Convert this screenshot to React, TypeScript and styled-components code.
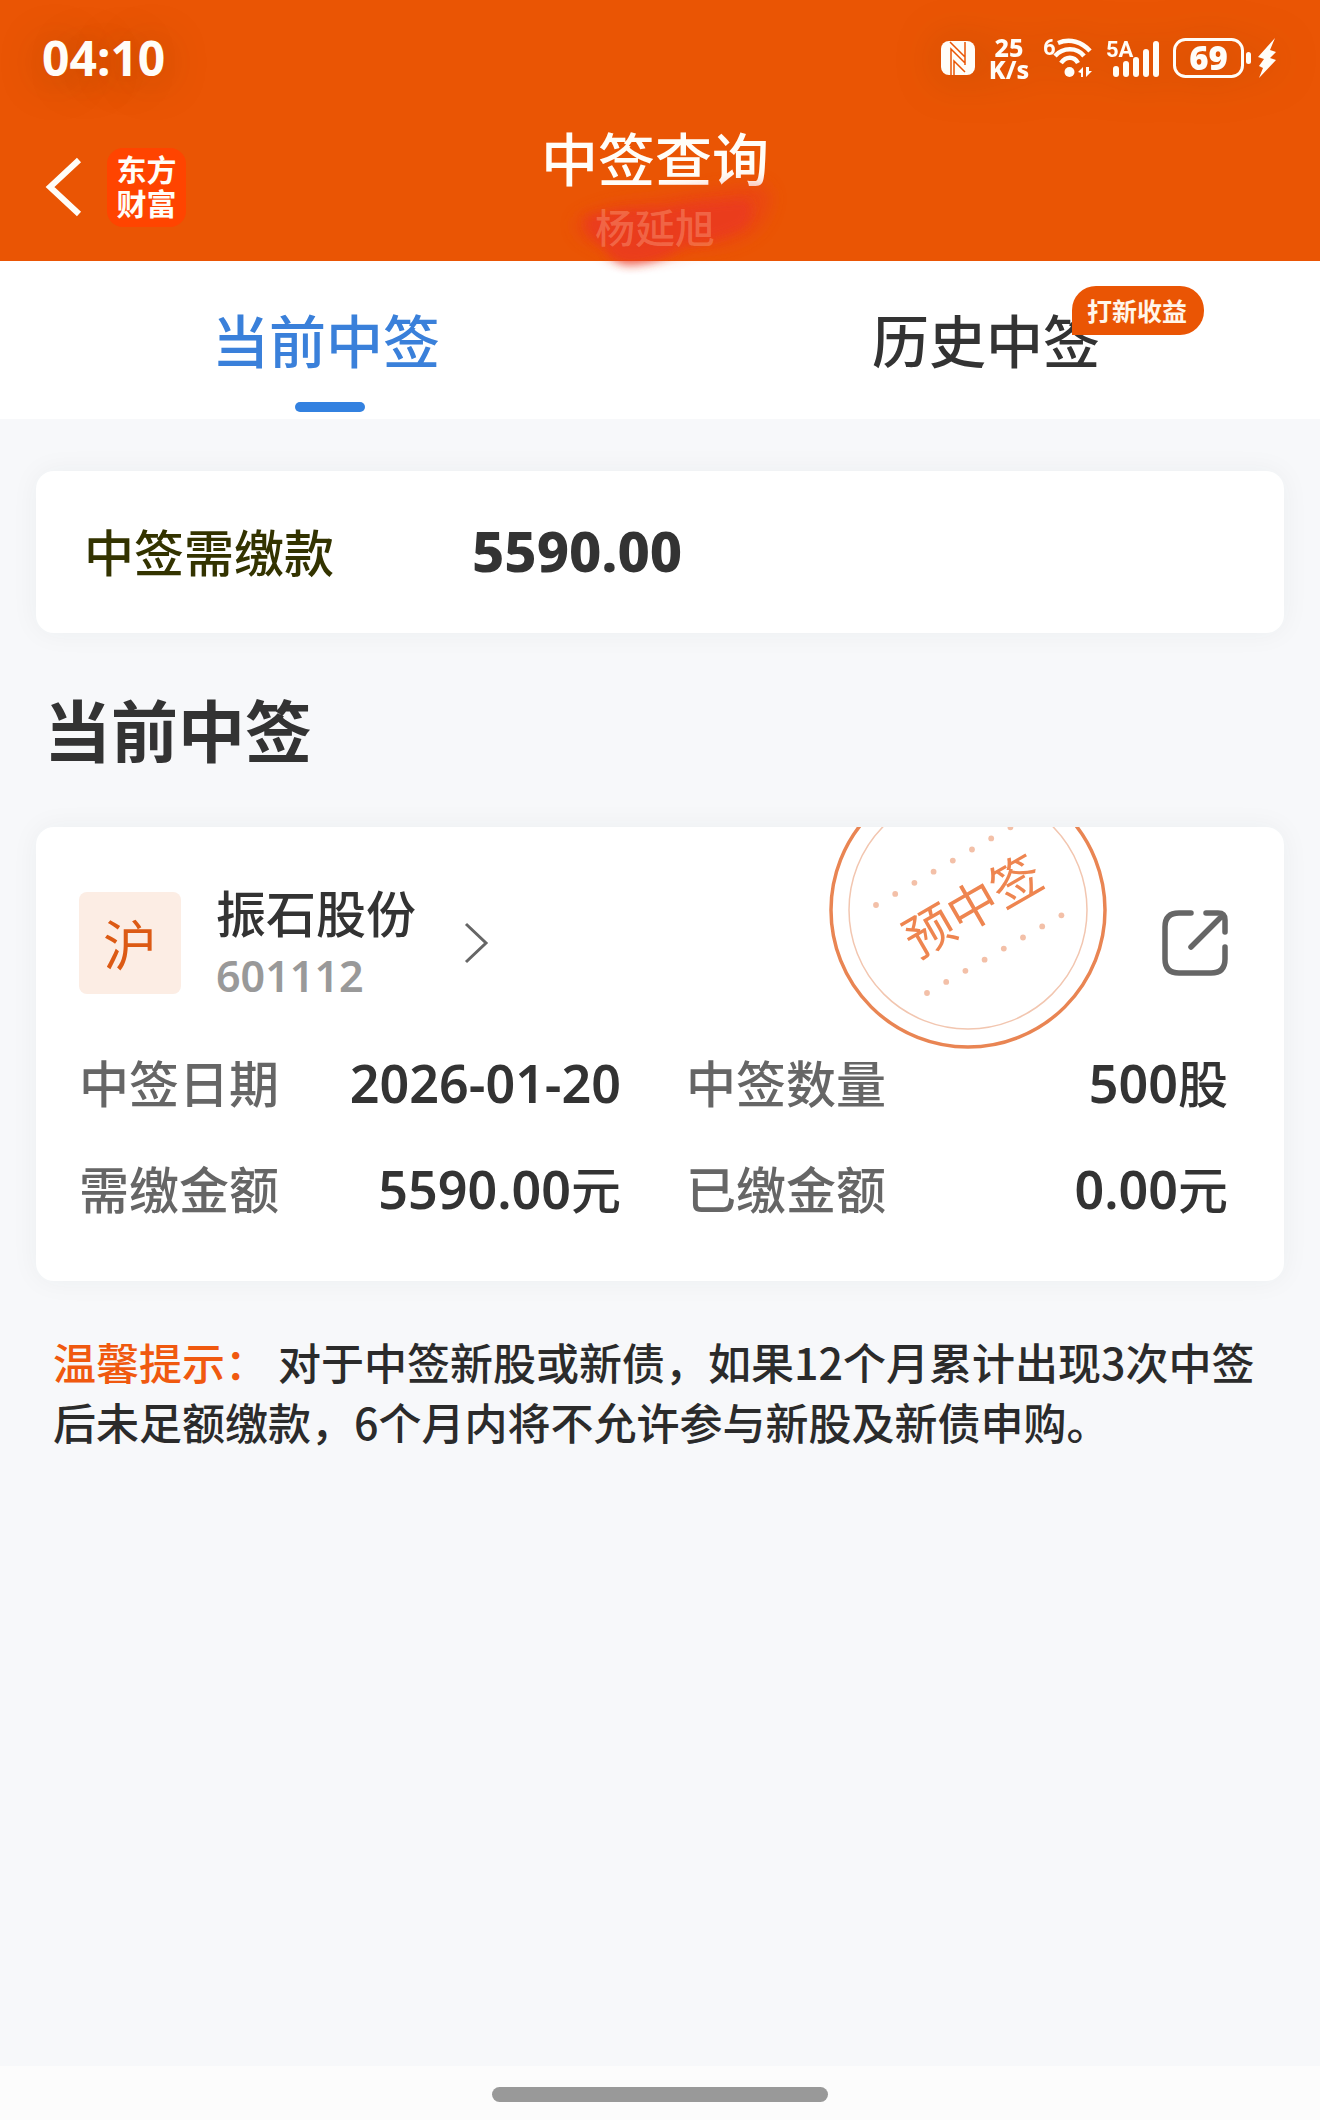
import React from 'react';
import styled, { createGlobalStyle } from 'styled-components';

const cjk = '"Noto Sans CJK SC", sans-serif';
const digits = '"Noto Sans", "Noto Sans CJK SC", sans-serif';
const orange = '#ea5504';
const ink = '#333333';

const GlobalStyle = createGlobalStyle`
  *, *::before, *::after { box-sizing: border-box; }
  body { margin: 0; background: #f7f8fa; }
  h1, h2, p, dl, dt, dd { margin: 0; font-weight: inherit; }
  button { border: 0; padding: 0; background: none; font: inherit; color: inherit; cursor: pointer; }
  svg { display: block; overflow: visible; }
`;

const Screen = styled.div`
  min-height: 100vh;
  display: flex;
  flex-direction: column;
  font-family: ${cjk};
  font-weight: 500;
  color: ${ink};
  background: #f7f8fa;
`;

const Header = styled.header`
  background: ${orange};
  color: #fffdf8;
`;

const StatusBar = styled.div`
  display: flex;
  align-items: center;
  justify-content: space-between;
  height: 116px;
  padding: 0 44px 0 42px;
`;

const Clock = styled.time`
  font: 700 48px/60px "Noto Sans", sans-serif;
  text-shadow: 0 4px 44px rgba(90, 50, 0, 0.4);
`;

const Indicators = styled.div`
  display: flex;
  align-items: center;
  gap: 14px;
  filter: drop-shadow(0 2px 22px rgba(90, 50, 0, 0.25));
`;

const NetSpeed = styled.div`
  width: 40px;
  display: flex;
  flex-direction: column;
  align-items: center;
  font: 800 25px/22px "Noto Sans", sans-serif;
`;

const Power = styled.div`
  display: flex;
  align-items: center;
  gap: 7px;
`;

const NavBar = styled.div`
  display: grid;
  grid-template-columns: 1fr auto 1fr;
  align-items: center;
  height: 145px;
  padding: 0 54px 3px 44px;
`;

const NavStart = styled.div`
  display: flex;
  align-items: center;
  gap: 23px;
`;

const Logo = styled.div`
  display: grid;
  place-content: center;
  width: 79px;
  height: 79px;
  padding-bottom: 4px;
  border-radius: 16px;
  background: #ff4400;
  text-align: center;
  font: 700 30px/34px ${cjk};
`;

const Heading = styled.div`
  position: relative;
  display: flex;
  flex-direction: column;
  align-items: center;
`;

const Title = styled.h1`
  font-size: 57px;
  line-height: 78px;
`;

const Smudge = styled.svg`
  position: absolute;
  left: 22px;
  top: 56px;
`;

const Account = styled.p`
  position: relative;
  font-size: 40px;
  line-height: 62px;
  color: rgba(255, 190, 160, 0.32);
`;

const Tabs = styled.nav`
  display: flex;
  height: 158px;
  background: #ffffff;
`;

const Tab = styled.button<{ $active?: boolean }>`
  flex: 1;
  display: flex;
  flex-direction: column;
  align-items: center;
  justify-content: space-between;
  padding: 35px 0 7px;
  color: ${(p) => (p.$active ? '#3a80da' : ink)};

  &::after {
    content: '';
    width: 70px;
    height: 10px;
    border-radius: 5px;
    background: ${(p) => (p.$active ? '#3381e0' : 'transparent')};
  }
`;

const TabLabel = styled.span`
  position: relative;
  padding-right: 8px;
  font-size: 57px;
  line-height: 84px;
`;

const Badge = styled.span`
  position: absolute;
  left: 200px;
  top: -10px;
  padding: 0 17px 0 15px;
  border-radius: 24px 24px 24px 0;
  background: ${orange};
  color: #fff6ea;
  font-size: 25px;
  font-weight: 700;
  line-height: 49px;
  white-space: nowrap;
`;

const Content = styled.main`
  flex: 1;
  padding: 52px 36px;
`;

const Card = styled.section`
  position: relative;
  border-radius: 18px;
  background: #ffffff;
  box-shadow: 0 0 28px rgba(40, 50, 50, 0.05);
`;

const DueCard = styled(Card)`
  display: flex;
  align-items: center;
  height: 162px;
  padding: 0 48px 4px;
`;

const DueLabel = styled.span`
  flex: 0 0 388px;
  font-size: 50px;
  line-height: 72px;
  color: #333300;
`;

const DueAmount = styled.strong`
  font: 800 56px/72px ${digits};
`;

const SectionTitle = styled.h2`
  padding: 46px 8px 50px;
  font-size: 67px;
  font-weight: 700;
  line-height: 98px;
`;

const StockCard = styled(Card)`
  overflow: hidden;
  padding: 51px 56px 58px 43px;
`;

const StockHeader = styled.div`
  display: flex;
  align-items: center;
  justify-content: space-between;
`;

const StockLink = styled.button`
  display: flex;
  align-items: center;
  text-align: left;
`;

const Market = styled.span`
  display: grid;
  place-items: center;
  width: 102px;
  height: 102px;
  border-radius: 8px;
  background: #fcede4;
  color: #dc5a14;
  font-size: 54px;
  font-weight: 400;
  line-height: 96px;
`;

const StockName = styled.span`
  display: flex;
  flex-direction: column;
  margin: 0 48px 0 35px;
  font-size: 50px;
  line-height: 66px;
`;

const StockCode = styled.span`
  font: 600 43px/64px ${digits};
  color: #999999;
`;

const Stamp = styled.svg`
  position: absolute;
  right: 176px;
  top: -57px;
`;

const Details = styled.dl`
  display: grid;
  grid-template-columns: 1fr 1fr;
  gap: 34px 65px;
  margin-top: 37px;
`;

const Detail = styled.div`
  display: flex;
  justify-content: space-between;
  font-size: 50px;
  line-height: 72px;
  white-space: nowrap;

  dt { color: #666666; }
`;

const Num = styled.span`
  font: 600 52px/50px ${digits};
`;

const Tip = styled.p`
  padding: 50px 17px 0;
  font-size: 43px;
  line-height: 60px;
  color: #2b2b2b;
`;

const TipTitle = styled.span`
  margin-right: 10px;
  color: #f0590f;
`;

const HomeBar = styled.footer`
  display: flex;
  justify-content: center;
  align-items: center;
  height: 54px;
  padding-top: 2px;
  background: #fcfcfc;

  &::after {
    content: '';
    width: 336px;
    height: 15px;
    border-radius: 8px;
    background: #999999;
  }
`;

const NfcIcon = () => (
  <svg width="34" height="34" viewBox="0 0 34 34" fill="none" aria-label="NFC">
    <rect width="34" height="34" rx="8" fill="#fffdf8" />
    <path d="M10 34V8L24 22M13 34V20L24 31M9 1L24 16M24 24V1" stroke={orange} strokeWidth="1.500" />
  </svg>
);

const WifiIcon = () => (
  <svg width="49" height="42" viewBox="0 0 49 42" fill="none" aria-label="Wi-Fi">
    <text x="0" y="18" fill="#fffdf8" fontFamily="Roboto, sans-serif" fontWeight="700" fontSize="22">6</text>
    <path d="M15 6C27 1 39 5 47 14M12 19C20 10 34 10 41 19M18 26C23 19 31 19 35 26" stroke="#fffdf8" strokeWidth="4.500" />
    <circle cx="26.500" cy="35" r="5" fill="#fffdf8" />
    <path d="M35 35L40 30V40H38V36ZM43 30V40L49 34H46V30Z" fill="#fffdf8" />
  </svg>
);

const SignalIcon = () => (
  <svg width="53" height="42" viewBox="0 0 53 42" fill="#fffdf8" aria-label="5A">
    <text x="0" y="20" fontFamily="Roboto, sans-serif" fontWeight="700" fontSize="22">5A</text>
    <rect x="7" y="29" width="6" height="11" rx="3" />
    <rect x="17" y="24" width="6" height="16" rx="3" />
    <rect x="27" y="20" width="6" height="20" rx="3" />
    <rect x="37" y="12" width="6" height="28" rx="3" />
    <rect x="47" y="4" width="6" height="36" rx="3" />
  </svg>
);

const BatteryIcon = () => (
  <svg width="78" height="40" viewBox="0 0 78 40" fill="none" aria-label="69">
    <rect x="1.500" y="1.500" width="68" height="37" rx="11" stroke="#fffdf8" strokeWidth="3" />
    <rect x="73" y="14" width="5" height="12" rx="2.500" fill="#fffdf8" />
    <text x="35.500" y="32" textAnchor="middle" fill="#fffdf8" fontFamily="Noto Sans, sans-serif" fontWeight="900" fontSize="33">69</text>
  </svg>
);

const BoltIcon = () => (
  <svg width="18" height="40" viewBox="0 0 18 40" fill="#fffdf8" aria-hidden="true">
    <path d="M17 0L0 19L6 21L1 28L5 30L1 40L18 22L12 20L18 14L12 12Z" />
  </svg>
);

const BackIcon = () => (
  <svg width="40" height="62" viewBox="0 0 40 62" fill="none" aria-hidden="true">
    <path d="M35 4L6 31L35 58" stroke="#fffdf8" strokeWidth="6" />
  </svg>
);

const ChevronIcon = () => (
  <svg width="24" height="40" viewBox="0 0 24 40" fill="none" aria-hidden="true">
    <path d="M2 1L22 20L2 39" stroke="#666666" strokeWidth="3" />
  </svg>
);

const ShareIcon = () => (
  <svg width="66" height="66" viewBox="0 0 66 66" fill="none" stroke="#666666" strokeWidth="5.500" strokeLinecap="round" aria-hidden="true">
    <path d="M29 3H17Q3 3 3 17V49Q3 63 17 63H49Q63 63 63 49V37M44 3H56Q63 3 63 10V22M60 6L29 37" />
  </svg>
);

const dots = Array.from({ length: 8 }, (_, i) => i);

const PreWinStamp = () => (
  <Stamp width="280" height="280" viewBox="0 0 280 280" fill="none">
    <circle cx="140" cy="140" r="137" stroke="#e98553" strokeWidth="3.500" />
    <circle cx="140" cy="140" r="119" stroke="#f2c6b0" strokeWidth="1.500" />
    {dots.map((i) => (
      <g key={i} fill="#f3c0a8">
        <circle cx={48 + i * 19.2} cy={135 - i * 11.1} r="2.900" />
        <circle cx={99 + i * 19.2} cy={223 - i * 11.1} r="2.900" />
      </g>
    ))}
    <text
      x="145"
      y="155"
      textAnchor="middle"
      transform="rotate(-30 144 137)"
      fill="#ee8550"
      fontFamily="Noto Sans CJK SC, sans-serif"
      fontSize="50"
      fontWeight="400"
    >
      预中签
    </text>
  </Stamp>
);

const rows = [
  { label: '中签日期', value: '2026-01-20', unit: '' },
  { label: '中签数量', value: '500', unit: '股' },
  { label: '需缴金额', value: '5590.00', unit: '元' },
  { label: '已缴金额', value: '0.00', unit: '元' },
];

export default function App() {
  return (
    <Screen>
      <GlobalStyle />
      <Header>
        <StatusBar>
          <Clock>04:10</Clock>
          <Indicators>
            <NfcIcon />
            <NetSpeed>
              <span>25</span>
              <span>K/s</span>
            </NetSpeed>
            <WifiIcon />
            <SignalIcon />
            <Power>
              <BatteryIcon />
              <BoltIcon />
            </Power>
          </Indicators>
        </StatusBar>
        <NavBar>
          <NavStart>
            <button type="button" aria-label="返回">
              <BackIcon />
            </button>
            <Logo>
              <span>东方</span>
              <span>财富</span>
            </Logo>
          </NavStart>
          <Heading>
            <Title>中签查询</Title>
            <Smudge width="220" height="110" viewBox="0 0 220 110" fill="#eb3920" aria-hidden="true">
              <defs>
                <filter id="soft" x="-20%" y="-30%" width="140%" height="160%">
                  <feGaussianBlur stdDeviation="8" />
                </filter>
                <filter id="core" x="-20%" y="-30%" width="140%" height="160%">
                  <feGaussianBlur stdDeviation="5" />
                </filter>
              </defs>
              <path
                filter="url(#soft)"
                opacity="0.45"
                d="M14 46Q40 30 84 28Q130 18 194 10Q214 14 206 36Q196 74 130 76Q100 86 66 86Q44 84 38 74Q6 62 14 46Z"
              />
              <path
                filter="url(#core)"
                opacity="0.7"
                d="M24 44Q60 34 100 36Q140 28 184 26Q194 36 182 54Q150 70 120 72Q100 90 66 92Q48 90 42 74Q20 62 24 44Z"
              />
            </Smudge>
            <Account>杨延旭</Account>
          </Heading>
        </NavBar>
      </Header>

      <Tabs>
        <Tab type="button" $active>
          <TabLabel>当前中签</TabLabel>
        </Tab>
        <Tab type="button">
          <TabLabel>
            历史中签
            <Badge>打新收益</Badge>
          </TabLabel>
        </Tab>
      </Tabs>

      <Content>
        <DueCard>
          <DueLabel>中签需缴款</DueLabel>
          <DueAmount>5590.00</DueAmount>
        </DueCard>

        <SectionTitle>当前中签</SectionTitle>

        <StockCard>
          <PreWinStamp />
          <StockHeader>
            <StockLink type="button">
              <Market>沪</Market>
              <StockName>
                振石股份
                <StockCode>601112</StockCode>
              </StockName>
              <ChevronIcon />
            </StockLink>
            <button type="button" aria-label="分享">
              <ShareIcon />
            </button>
          </StockHeader>
          <Details>
            {rows.map((row) => (
              <Detail key={row.label}>
                <dt>{row.label}</dt>
                <dd>
                  <Num>{row.value}</Num>
                  {row.unit}
                </dd>
              </Detail>
            ))}
          </Details>
        </StockCard>

        <Tip>
          <TipTitle>温馨提示：</TipTitle>
          对于中签新股或新债，如果12个月累计出现3次中签后未足额缴款，6个月内将不允许参与新股及新债申购。
        </Tip>
      </Content>

      <HomeBar />
    </Screen>
  );
}
